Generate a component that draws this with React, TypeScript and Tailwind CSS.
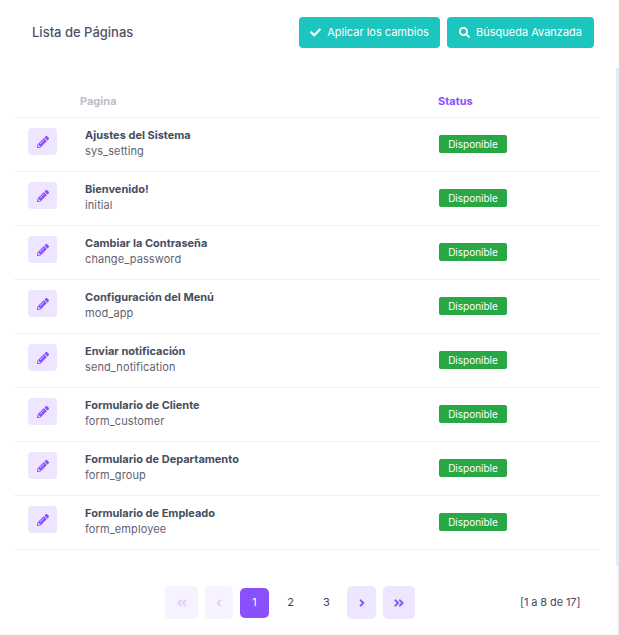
import { FaCheck, FaSearch, FaPencilAlt, FaAngleDoubleLeft, FaAngleLeft, FaAngleRight, FaAngleDoubleRight } from "react-icons/fa";

const pages = [
  { title: "Ajustes del Sistema", code: "sys_setting" },
  { title: "Bienvenido!", code: "initial" },
  { title: "Cambiar la Contraseña", code: "change_password" },
  { title: "Configuración del Menú", code: "mod_app" },
  { title: "Enviar notificación", code: "send_notification" },
  { title: "Formulario de Cliente", code: "form_customer" },
  { title: "Formulario de Departamento", code: "form_group" },
  { title: "Formulario de Empleado", code: "form_employee" },
];

const App = () => {
  return (
    <div className="h-[635px] w-[619px] overflow-hidden flex bg-white font-['Inter','Noto_Sans',sans-serif] text-[#4a4a5e]">
      <div className="w-[616px] shrink-0">
        {/* cabecera */}
        <div className="flex items-center justify-between pl-[32px] pr-[22px] pt-[17px]">
          <h1 className="text-[13px] font-medium text-[#51516a]">Lista de Páginas</h1>
          <div className="flex gap-[7px]">
            <button className="flex h-[31px] w-[141px] items-center justify-center gap-[6px] rounded-[4px] bg-[#1cc5be] text-[11px] text-white">
              <FaCheck size={11} />
              Aplicar los cambios
            </button>
            <button className="flex h-[31px] w-[147px] items-center justify-center gap-[6px] rounded-[4px] bg-[#1cc5be] text-[11px] text-white">
              <FaSearch size={11} />
              Búsqueda Avanzada
            </button>
          </div>
        </div>

        {/* tabla */}
        <div className="ml-[14px] mr-[16px] mt-[37px]">
          <div className="flex h-[33px] items-start border-b border-[#f0f0f3] pt-[8px] text-[11px] font-bold">
            <span className="ml-[66px] w-[358px] text-[#bcbcca]">Pagina</span>
            <span className="text-[#8950fc]">Status</span>
          </div>
          {pages.map((page) => (
            <div key={page.code} className="flex h-[54px] items-start border-b border-[#f0f0f3]">
              <button className="ml-[14px] mt-[10px] flex h-[27px] w-[29px] items-center justify-center rounded-[4px] bg-[#eee5ff] text-[#8950fc]">
                <FaPencilAlt size={12} />
              </button>
              <div className="ml-[28px] mt-[9px] w-[354px] leading-[16px]">
                <div className="text-[11px] font-bold text-[#464e5f]">{page.title}</div>
                <div className="text-[11px] tracking-[0.1px] text-[#5f6270]">{page.code}</div>
              </div>
              <span className="mt-[17px] flex h-[18px] w-[68px] items-center justify-center rounded-[2px] bg-[#28a745] text-[10px] text-white">
                Disponible
              </span>
            </div>
          ))}
        </div>

        {/* paginacion */}
        <div className="mt-[36px] flex items-center pl-[165px] text-[11px]">
          <button className="flex h-[33px] w-[33px] items-center justify-center rounded-[5px] bg-[#f6f2ff] text-[#ddccfe]"><FaAngleDoubleLeft size={12} /></button>
          <button className="ml-[7px] flex h-[33px] w-[28px] items-center justify-center rounded-[5px] bg-[#f6f2ff] text-[#ddccfe]"><FaAngleLeft size={12} /></button>
          <button className="ml-[7px] flex h-[30px] w-[29px] items-center justify-center rounded-[5px] bg-[#8950fc] text-white">1</button>
          <button className="ml-[7px] flex h-[30px] w-[29px] items-center justify-center text-[#3f4254]">2</button>
          <button className="ml-[7px] flex h-[30px] w-[29px] items-center justify-center text-[#3f4254]">3</button>
          <button className="ml-[6px] flex h-[33px] w-[29px] items-center justify-center rounded-[5px] bg-[#eee5ff] text-[#8950fc]"><FaAngleRight size={12} /></button>
          <button className="ml-[7px] flex h-[33px] w-[32px] items-center justify-center rounded-[5px] bg-[#eee5ff] text-[#8950fc]"><FaAngleDoubleRight size={12} /></button>
          <span className="ml-[105px] tracking-[-0.1px] text-[#4a4a5e]">[1 a 8 de 17]</span>
        </div>
      </div>
      {/* barra de scroll */}
      <div className="w-[3px] pl-[1px] bg-white">
        <div className="h-full w-[2px] bg-[#eef1f7]">
          <div className="ml-[-1px] mt-[68px] h-[498px] w-[3px] bg-[#e9eaf7]" />
        </div>
      </div>
    </div>
  );
};

export default App;
